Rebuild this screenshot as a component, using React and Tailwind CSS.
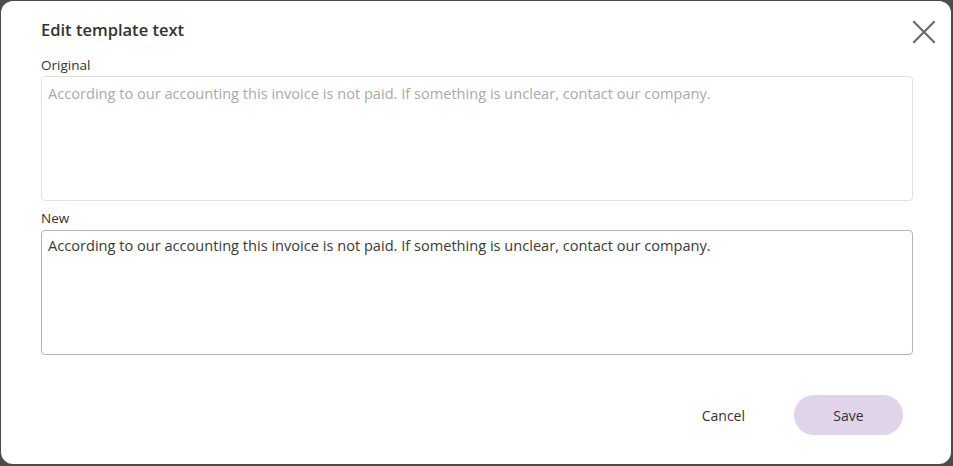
import React from "react";

export default function App() {
  const text =
    "According to our accounting this invoice is not paid. If something is unclear, contact our company.";
  return (
    <div
      className="w-[953px] h-[466px] bg-[#4b4b4b] pl-[1px] pt-[1px] pr-[2px] pb-[2px]"
      style={{ fontFamily: "'Open Sans', Lato, sans-serif" }}
    >
      <div className="relative h-full w-full rounded-[12px] bg-white pl-[40px] pr-[38px]">
        <button className="absolute right-[14px] top-[18px] flex h-[26px] w-[26px] items-center justify-center text-[#666]">
          <svg width="24" height="24" viewBox="0 0 24 24" fill="none" stroke="currentColor" strokeWidth="2" strokeLinecap="square">
            <line x1="2" y1="2" x2="22" y2="22" />
            <line x1="22" y1="2" x2="2" y2="22" />
          </svg>
        </button>
        <h1 className="pt-[17px] text-[16.5px] leading-[24px] font-semibold text-[#333]">Edit template text</h1>
        <div className="mt-[13px] text-[13.5px] leading-[20px] text-[#333]">Original</div>
        <textarea
          readOnly
          className="mt-[1px] block h-[125px] w-full resize-none rounded-[4px] border border-[#e2e2e2] px-[6px] py-[6px] text-[14.6px] leading-[20px] text-[#aaa] outline-none"
          value={text}
        />
        <div className="mt-[7px] text-[13.5px] leading-[20px] text-[#333]">New</div>
        <textarea
          readOnly
          className="mt-[2px] block h-[125px] w-full resize-none rounded-[4px] border border-[#b3b3b3] px-[6px] pt-[4px] text-[14.6px] leading-[20px] text-[#3a3a3a] outline-none"
          value={text}
        />
        <div className="mt-[40px] flex items-center justify-end gap-[25px] pr-[10px]">
          <button className="h-[40px] px-[24px] text-[14px] text-[#333]">Cancel</button>
          <button className="h-[40px] w-[109px] rounded-full bg-[#dfd4ea] text-[14px] text-[#333]">Save</button>
        </div>
      </div>
    </div>
  );
}
